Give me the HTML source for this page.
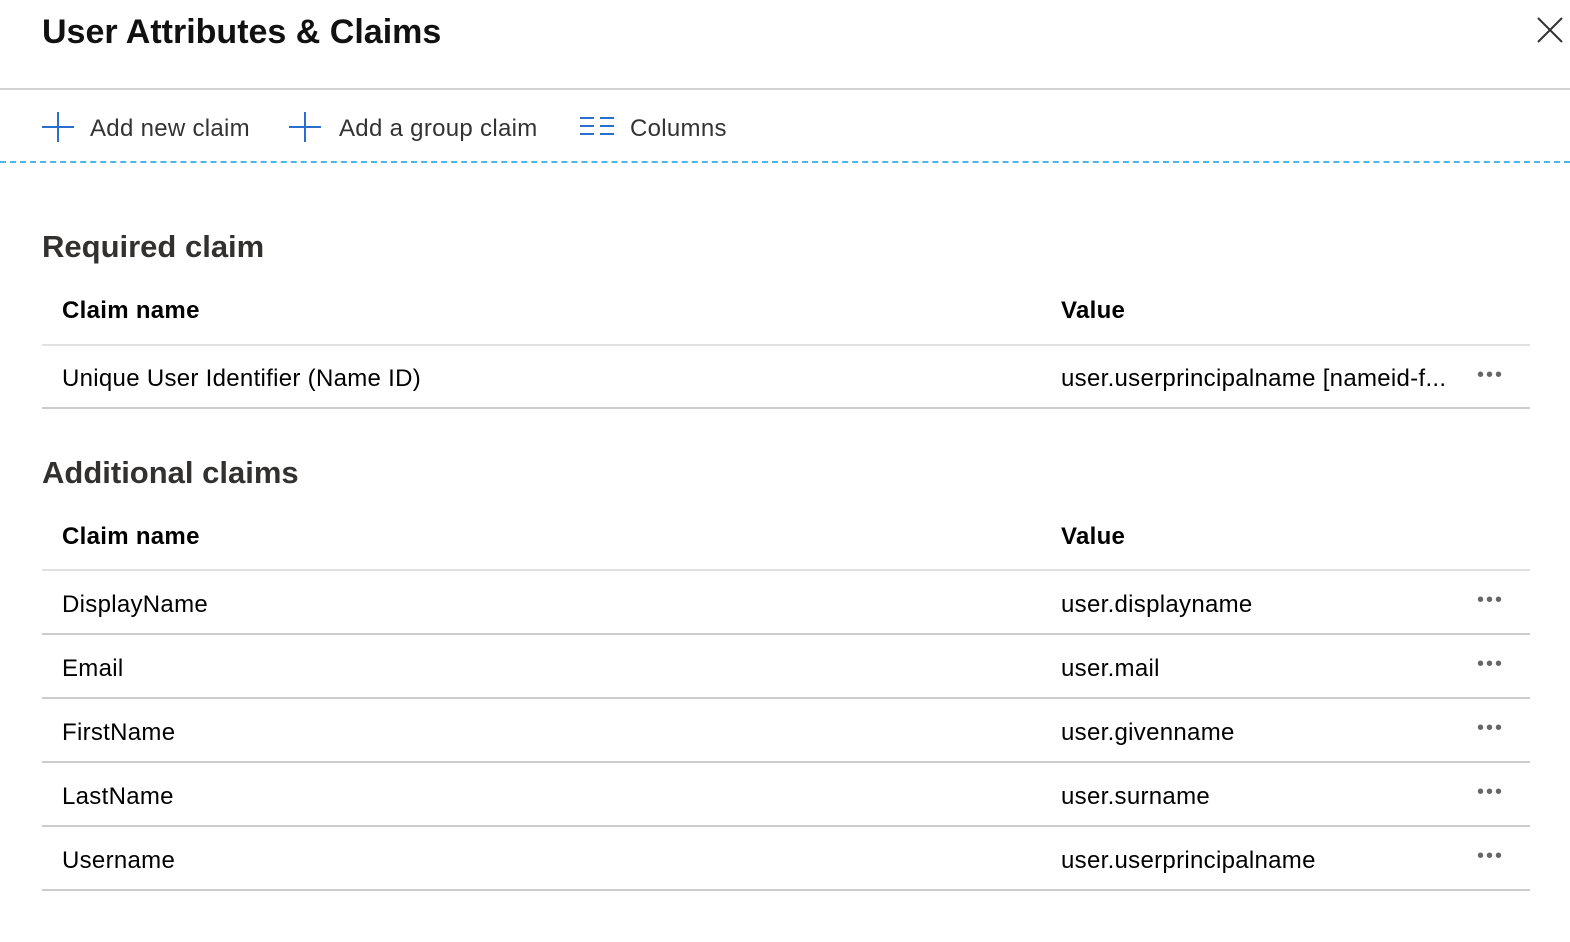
<!DOCTYPE html>
<html><head><style>
body{margin:0;width:1570px;height:942px;background:#fff;font-family:"Liberation Sans",sans-serif;color:#000;position:relative;overflow:hidden}
.a{position:absolute;white-space:nowrap}
.t{font-size:24px;line-height:30px;letter-spacing:0.3px}
.h{font-weight:bold}
.line{position:absolute;left:42px;width:1488px;height:2px;background:#e1e1e1}
.dots{position:absolute;left:1477px;font-size:20px;letter-spacing:2px;color:#666;line-height:10px}
</style></head><body>
<div class="a" style="left:42px;top:12px;font-size:34px;font-weight:bold;line-height:40px;color:#111">User Attributes &amp; Claims</div>
<svg class="a" style="left:1536px;top:16px" width="28" height="28"><path d="M2 2L26 26M26 2L2 26" stroke="#333" stroke-width="2"/></svg>
<div class="a" style="left:0;top:88px;width:1570px;height:2px;background:#d2d2d2"></div>
<svg class="a" style="left:42px;top:112px" width="32" height="32"><path d="M16 0V30M0 15H32" stroke="#2b6fce" stroke-width="2"/></svg>
<div class="a t" style="left:90px;top:114px;color:#333">Add new claim</div>
<svg class="a" style="left:289px;top:112px" width="32" height="32"><path d="M16 0V30M0 15H32" stroke="#2b6fce" stroke-width="2"/></svg>
<div class="a t" style="left:339px;top:114px;color:#333">Add a group claim</div>
<svg class="a" style="left:580px;top:116px" width="34" height="22"><path d="M0 2H14M20 2H34M0 10H14M20 10H34M0 18H14M20 18H34" stroke="#2b6fce" stroke-width="2"/></svg>
<div class="a t" style="left:630px;top:114px;color:#333">Columns</div>
<div class="a" style="left:0;top:161px;width:1570px;height:0;border-top:2px dashed #4bb6e8"></div>

<div class="a" style="left:42px;top:229px;font-size:31px;font-weight:bold;color:#323130;line-height:36px">Required claim</div>
<div class="a t h" style="left:62px;top:296px">Claim name</div>
<div class="a t h" style="left:1061px;top:296px">Value</div>
<div class="line" style="top:344px"></div>
<div class="a t" style="left:62px;top:364px">Unique User Identifier (Name ID)</div>
<div class="a t" style="left:1061px;top:364px">user.userprincipalname [nameid-f...</div>
<div class="dots" style="top:370px">•••</div>
<div class="line" style="top:407px;background:#ccc"></div>

<div class="a" style="left:42px;top:455px;font-size:31px;font-weight:bold;color:#323130;line-height:36px">Additional claims</div>
<div class="a t h" style="left:62px;top:522px">Claim name</div>
<div class="a t h" style="left:1061px;top:522px">Value</div>
<div class="line" style="top:569px"></div>

<div class="a t" style="left:62px;top:590px">DisplayName</div><div class="a t" style="left:1061px;top:590px">user.displayname</div><div class="dots" style="top:595px">•••</div>
<div class="line" style="top:633px;background:#ccc"></div>
<div class="a t" style="left:62px;top:654px">Email</div><div class="a t" style="left:1061px;top:654px">user.mail</div><div class="dots" style="top:659px">•••</div>
<div class="line" style="top:697px;background:#ccc"></div>
<div class="a t" style="left:62px;top:718px">FirstName</div><div class="a t" style="left:1061px;top:718px">user.givenname</div><div class="dots" style="top:723px">•••</div>
<div class="line" style="top:761px;background:#ccc"></div>
<div class="a t" style="left:62px;top:782px">LastName</div><div class="a t" style="left:1061px;top:782px">user.surname</div><div class="dots" style="top:787px">•••</div>
<div class="line" style="top:825px;background:#ccc"></div>
<div class="a t" style="left:62px;top:846px">Username</div><div class="a t" style="left:1061px;top:846px">user.userprincipalname</div><div class="dots" style="top:851px">•••</div>
<div class="line" style="top:889px;background:#ccc"></div>
</body></html>
